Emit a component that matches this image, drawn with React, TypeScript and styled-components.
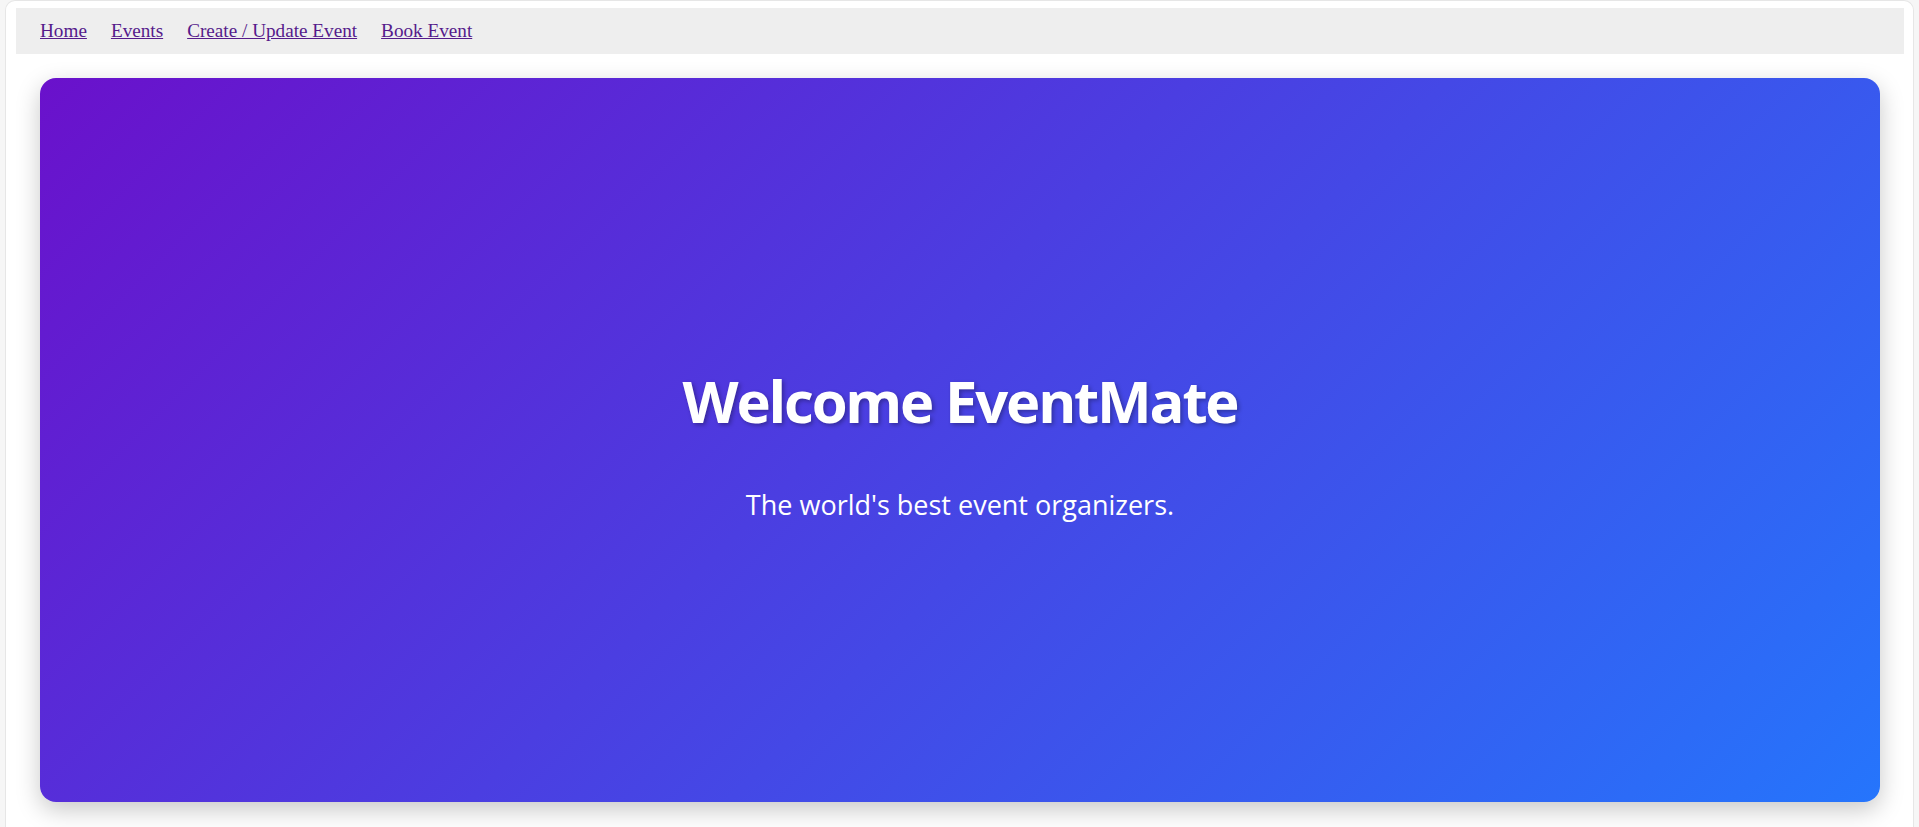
import React from "react";
import styled, { createGlobalStyle } from "styled-components";

const GlobalStyle = createGlobalStyle`
  html, body {
    margin: 0;
    padding: 0;
    background: #f6f6f6;
    overflow: hidden;
  }
  body {
    font-family: "Liberation Serif", "Times New Roman", serif;
  }
`;

const Frame = styled.div`
  margin: 0 5px 0 5px;
  min-height: 840px;
  box-sizing: border-box;
  background: #ffffff;
  border: 1px solid #e6e6e6;
  border-bottom: none;
  border-radius: 10px 10px 0 0;
  padding: 7px 9px 0 10px;
`;

const Nav = styled.nav`
  display: flex;
  align-items: center;
  gap: 24px;
  height: 46px;
  box-sizing: border-box;
  padding: 0 24px;
  background: #eeeeee;
`;

const NavLink = styled.a`
  font-family: "Liberation Serif", "Times New Roman", serif;
  font-size: 19.2px;
  line-height: 22px;
  color: #551a8b;
  text-decoration: underline;
  cursor: pointer;
`;

const Main = styled.main`
  padding: 24px 24px 0;
`;

const Hero = styled.section`
  height: 724px;
  box-sizing: border-box;
  padding: 7px 0 0;
  border-radius: 16px;
  background: linear-gradient(135deg, #6a11cb 0%, #2575fc 100%);
  box-shadow: 0 8px 24px rgba(0, 0, 0, 0.22);
  display: flex;
  flex-direction: column;
  align-items: center;
  justify-content: center;
  color: #ffffff;
  text-align: center;
`;

const Title = styled.h1`
  margin: 0 0 54px;
  font-family: "Open Sans", "Noto Sans", sans-serif;
  font-weight: 700;
  font-size: 58px;
  line-height: 1.2;
  letter-spacing: -2.2px;
  text-shadow: 2px 2px 4px rgba(0, 0, 0, 0.3);
`;

const Subtitle = styled.p`
  margin: 0;
  font-family: "Open Sans", "Noto Sans", sans-serif;
  font-weight: 400;
  font-size: 27px;
  line-height: 1.2;
  letter-spacing: 0;
`;

export default function App() {
  const links = ["Home", "Events", "Create / Update Event", "Book Event"];
  return (
    <>
      <GlobalStyle />
      <Frame>
        <Nav>
          {links.map((l) => (
            <NavLink key={l} href="#">
              {l}
            </NavLink>
          ))}
        </Nav>
        <Main>
          <Hero>
            <Title>Welcome EventMate</Title>
            <Subtitle>The world's best event organizers.</Subtitle>
          </Hero>
        </Main>
      </Frame>
    </>
  );
}
